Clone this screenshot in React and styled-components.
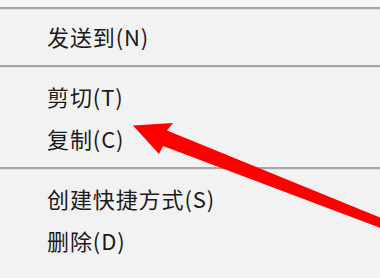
import React from "react";
import styled, { createGlobalStyle } from "styled-components";

const GlobalStyle = createGlobalStyle`
  html, body {
    margin: 0;
    padding: 0;
    background: #f2f2f2;
  }
  body {
    font-family: "Noto Sans CJK SC", "Noto Sans", sans-serif;
  }
`;

const Page = styled.div`
  position: relative;
  width: 380px;
  height: 278px;
  overflow: hidden;
  background: #f2f2f2;
`;

const Menu = styled.ul`
  list-style: none;
  margin: 0;
  padding: 0;
  display: flex;
  flex-direction: column;
`;

const Separator = styled.li`
  height: ${p => (p.$first ? 15 : 18)}px;
  display: flex;
  align-items: ${p => (p.$first ? "flex-start" : "center")};
  padding-top: ${p => (p.$first ? 7 : 0)}px;
  box-sizing: border-box;
  background: ${p => (p.$first ? "linear-gradient(#f6f6f6 0 7px, #f2f2f2 7px)" : "transparent")};

  &::after {
    content: "";
    display: block;
    width: 100%;
    height: 2px;
    background: #a6a6a6;
    box-shadow: 0 1px 0 #e2e2e2;
  }
`;

const Item = styled.li`
  height: 42px;
  display: flex;
  align-items: center;
  padding-left: 47px;
  font-size: 22px;
  letter-spacing: 0.9px;
  color: #1a1a1a;
  white-space: nowrap;
`;

const ArrowLayer = styled.svg`
  position: absolute;
  left: 0;
  top: 0;
  width: 380px;
  height: 278px;
  pointer-events: none;
`;

const sections = [
  ["发送到(N)"],
  ["剪切(T)", "复制(C)"],
  ["创建快捷方式(S)", "删除(D)"],
];

const App = () => {
  return (
    <Page>
      <GlobalStyle />
      <Menu>
        {sections.map((group, i) => (
          <React.Fragment key={i}>
            <Separator $first={i === 0} />
            {group.map(label => (
              <Item key={label}>{label}</Item>
            ))}
          </React.Fragment>
        ))}
      </Menu>
      <ArrowLayer viewBox="0 0 380 278">
        <polygon
          points="133,125.5 173,123 167,130.5 386,220 386,230 163,146 159,154"
          fill="#ff0000"
        />
      </ArrowLayer>
    </Page>
  );
};

export default App;
